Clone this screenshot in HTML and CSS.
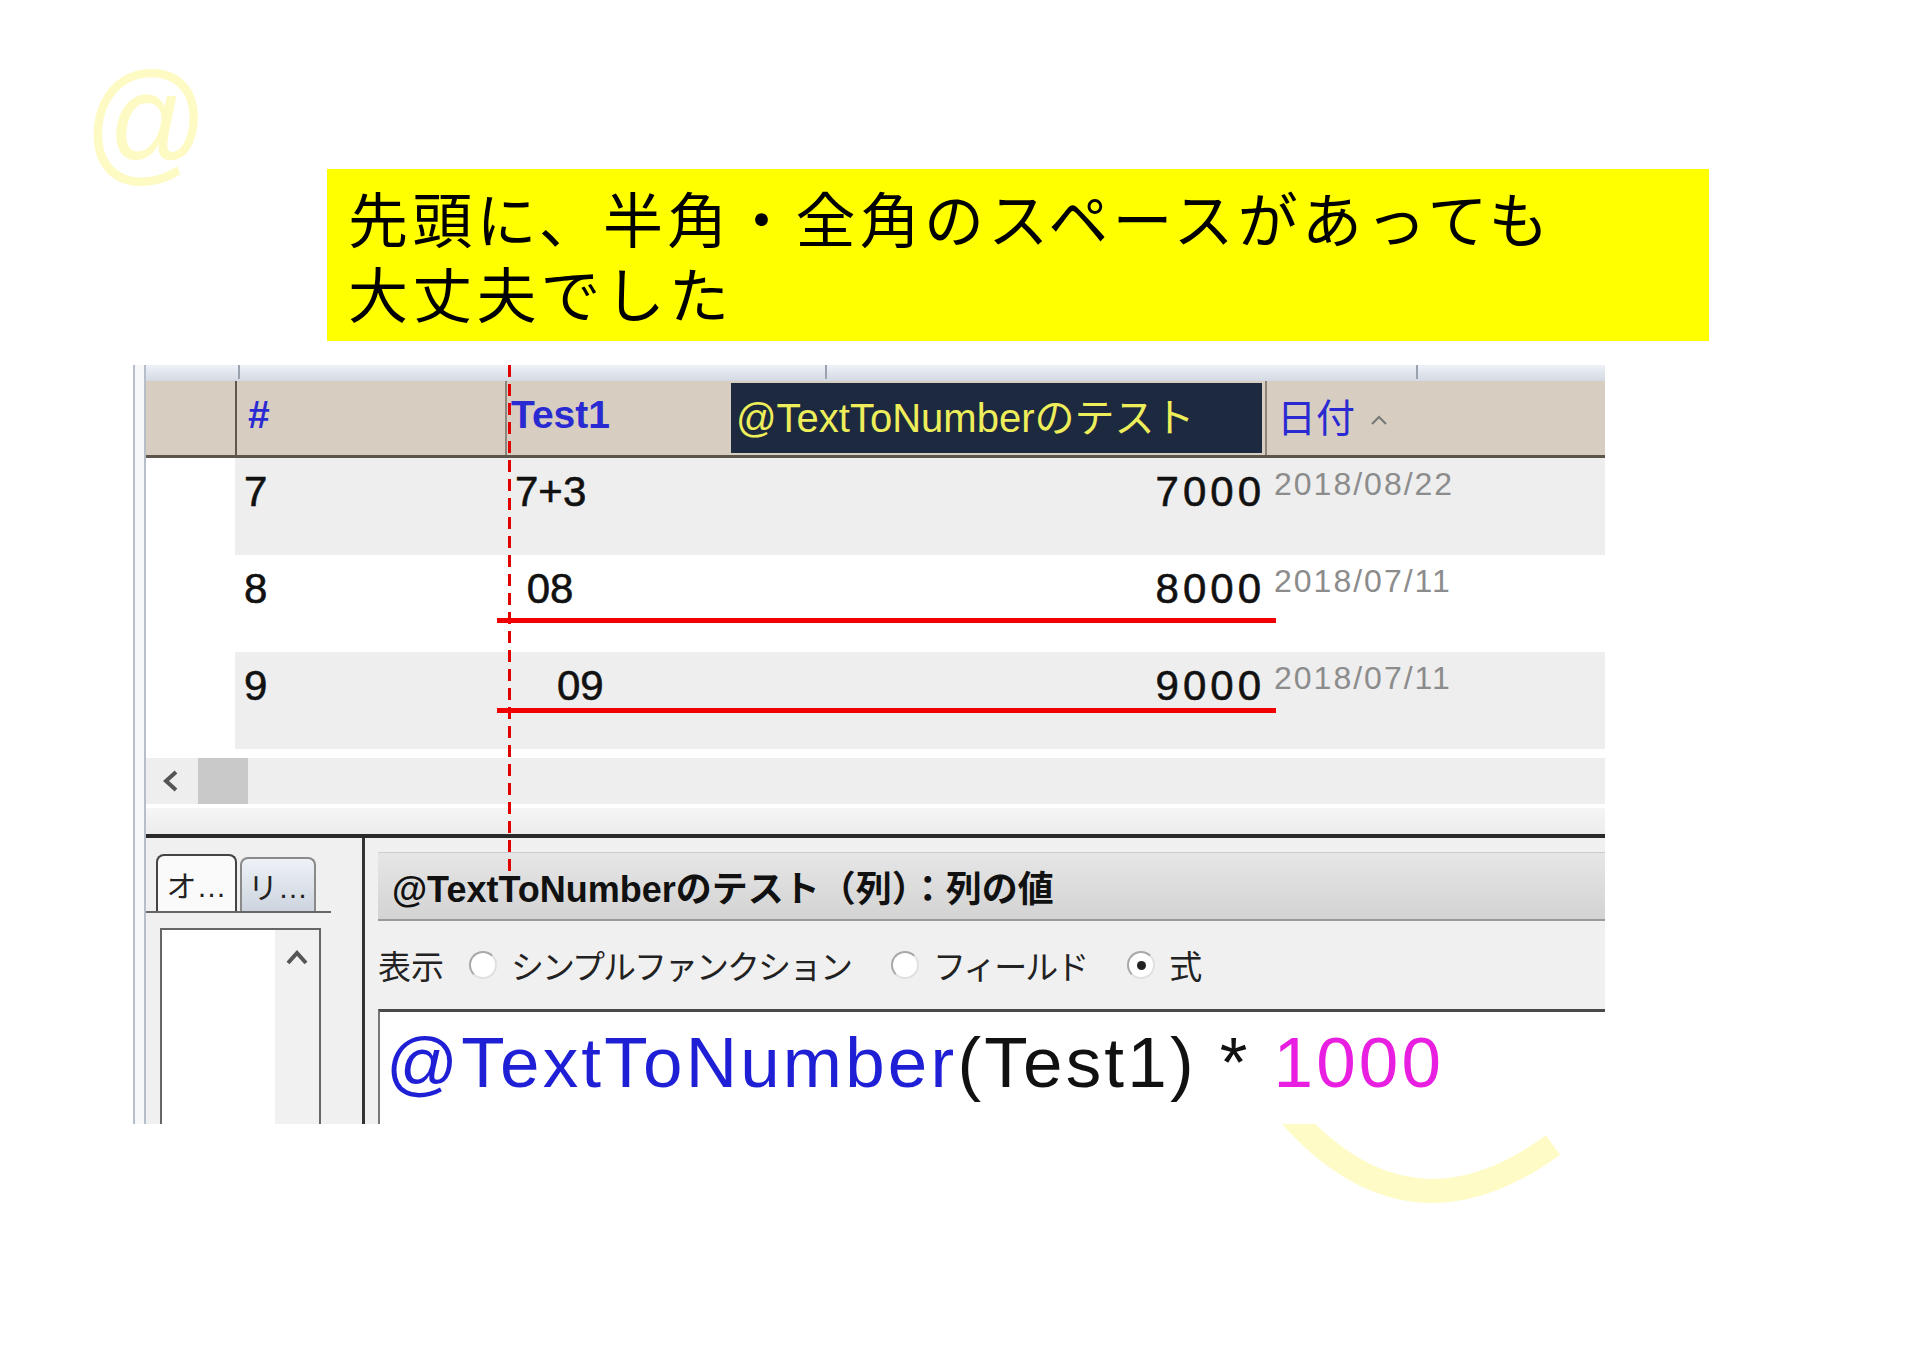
FILE: index.html
```html
<!DOCTYPE html>
<html lang="ja">
  <head>
    <meta charset="UTF-8">
    <meta name="viewport" content="width=device-width, initial-scale=1.0">
    <link rel="stylesheet" href="styles.css">
    <title>TextToNumber</title>
  </head>
  <body>
    <div class="mark-at">@</div>
    <svg class="mark-arc" width="300" height="110" viewBox="0 0 300 110">
      <path d="M10 15 Q130 150 273 45" fill="none" stroke="#fefbc6" stroke-width="24"/>
    </svg>

    <div class="note">
      <p>先頭に、半角・全角のスペースがあっても<br>大丈夫でした</p>
    </div>

    <div class="shot">
      <div class="edge"></div>
      <div class="app">
        <div class="topband">
          <span class="tick t1"></span>
          <span class="tick t2"></span>
          <span class="tick t3"></span>
        </div>

        <div class="grid head">
          <div class="cell c-blank"></div>
          <div class="cell c-no">#</div>
          <div class="cell c-test">Test1</div>
          <div class="cell c-calc"><span class="selected">@TextToNumberのテスト</span></div>
          <div class="cell c-date">日付
            <svg class="sort" width="20" height="14" viewBox="0 0 20 14"><polyline points="3,11 10,4 17,11" fill="none" stroke="#777" stroke-width="2"/></svg>
          </div>
        </div>

        <div class="grid row alt">
          <div class="cell c-blank"></div>
          <div class="cell c-no">7</div>
          <div class="cell c-test">7+3</div>
          <div class="cell c-calc">7000</div>
          <div class="cell c-date">2018/08/22</div>
        </div>
        <div class="grid row">
          <div class="cell c-blank"></div>
          <div class="cell c-no">8</div>
          <div class="cell c-test"> 08</div>
          <div class="cell c-calc">8000</div>
          <div class="cell c-date">2018/07/11</div>
        </div>
        <div class="grid row alt">
          <div class="cell c-blank"></div>
          <div class="cell c-no">9</div>
          <div class="cell c-test">　09</div>
          <div class="cell c-calc">9000</div>
          <div class="cell c-date">2018/07/11</div>
        </div>

        <div class="hscroll">
          <div class="scroll-track">
            <svg class="scroll-left" width="22" height="24" viewBox="0 0 22 24"><polyline points="16,3 6,12 16,21" fill="none" stroke="#555" stroke-width="4"/></svg>
            <div class="scroll-thumb"></div>
          </div>
          <div class="scroll-foot"></div>
        </div>

        <div class="bottom">
          <div class="side">
            <div class="tabs">
              <div class="tab active">オ…</div>
              <div class="tab">リ…</div>
            </div>
            <div class="listbox">
              <div class="list-area"></div>
              <div class="list-bar">
                <svg width="26" height="18" viewBox="0 0 26 18"><polyline points="4,15 13,5 22,15" fill="none" stroke="#555" stroke-width="4"/></svg>
              </div>
            </div>
          </div>

          <div class="editor">
            <div class="editor-title">@TextToNumberのテスト（列）：列の値</div>
            <div class="mode">
              <span class="label">表示</span>
              <span class="radio"></span>
              <span class="opt">シンプルファンクション</span>
              <span class="radio"></span>
              <span class="opt">フィールド</span>
              <span class="radio checked"></span>
              <span class="opt">式</span>
            </div>
            <div class="formula"><span class="fn">@TextToNumber</span>(Test1) * <span class="num">1000</span></div>
          </div>
        </div>
      </div>

      <div class="guide"></div>
      <div class="underline u1"></div>
      <div class="underline u2"></div>
    </div>
  </body>
</html>
```

FILE: styles.css
```css
body {
  margin: 0;
  width: 1920px;
  height: 1358px;
  overflow: hidden;
  background-color: #ffffff;
  position: relative;
  font-family: "Liberation Sans", "Noto Sans CJK JP", sans-serif;
}

/* pale watermarks behind the slide */
.mark-at {
  position: absolute;
  left: 84px;
  top: 52px;
  font-size: 136px;
  line-height: 1;
  color: #fdfac4;
  transform: scaleX(0.9);
  transform-origin: left top;
}

.mark-arc {
  position: absolute;
  left: 1280px;
  top: 1100px;
}

.note {
  position: relative;
  margin: 169px 0 0 327px;
  width: 1382px;
  box-sizing: border-box;
  padding: 10px 0 12px 21px;
  background-color: #ffff00;
}

.note p {
  margin: 0;
  font-family: "Noto Sans CJK JP", sans-serif;
  font-size: 60px;
  line-height: 75px;
  letter-spacing: 4.2px;
  color: #000000;
}

/* screenshot */
.shot {
  position: relative;
  z-index: 1;
  display: flex;
  margin: 24px 0 0 133px;
  width: 1472px;
  height: 759px;
  overflow: hidden;
}

.edge {
  flex-shrink: 0;
  width: 9px;
  border-left: 2px solid #b6bec9;
  border-right: 2px solid #b6bec9;
  background-color: #f7f8fa;
}

.app {
  flex: 1;
  min-width: 0;
  display: flex;
  flex-direction: column;
  background-color: #ffffff;
}

.app > div {
  flex-shrink: 0;
}

.topband {
  display: flex;
  height: 16px;
  background: linear-gradient(#eef1f6, #d3d9e3);
}

.tick {
  width: 2px;
  height: 14px;
  background-color: #9aa2ae;
}
.t1 { margin-left: 92px; }
.t2 { margin-left: 585px; }
.t3 { margin-left: 589px; }

.grid {
  display: grid;
  grid-template-columns: 89px 270px 226px 534px 1fr;
}

.head {
  height: 74px;
  background-color: #d7cdc0;
  border-bottom: 3px solid #5c554c;
  font-size: 39px;
  font-weight: bold;
  color: #2a2ad2;
}

.head .cell {
  display: flex;
  align-items: center;
  padding-bottom: 6px;
  box-sizing: border-box;
}

.head .c-no {
  border-left: 2px solid #5f584e;
  padding-left: 11px;
}

.head .c-test {
  border-left: 2px solid #8c857b;
  padding-left: 4px;
}

.head .c-calc {
  padding: 2px 3px 2px 0;
}

.head .selected {
  display: flex;
  align-items: center;
  width: 100%;
  height: 100%;
  padding: 0 0 6px 5px;
  box-sizing: border-box;
  background-color: #1d293f;
  color: #eeee5a;
  font-weight: normal;
  font-size: 40px;
}

.head .c-date {
  border-left: 2px solid #8c857b;
  padding-left: 10px;
  font-weight: normal;
}

.sort {
  margin: 10px 0 0 14px;
}

.row {
  height: 97px;
  font-size: 42px;
  line-height: 1;
  color: #111111;
  -webkit-text-stroke: 0.6px #111111;
}

.row .cell {
  padding-top: 13px;
  white-space: pre;
}

.row.alt .cell {
  background-color: #eeeeee;
}

.row.alt .c-blank {
  background-color: #ffffff;
}

.row .c-no {
  padding-left: 9px;
}

.row .c-test {
  padding-left: 10px;
}

.row .c-calc {
  text-align: right;
  padding-right: 0;
  letter-spacing: 4px;
}

.row .c-date {
  padding: 10px 0 0 9px;
  font-size: 32px;
  letter-spacing: 2px;
  color: #8c8c8c;
  -webkit-text-stroke: 0;
}

.hscroll {
  padding-top: 9px;
  border-bottom: 4px solid #2a2a2a;
}

.scroll-track {
  display: flex;
  align-items: center;
  height: 46px;
  background-color: #eeeeee;
  border-bottom: 4px solid #ffffff;
}

.scroll-left {
  margin-left: 14px;
}

.scroll-thumb {
  width: 50px;
  height: 100%;
  margin-left: 16px;
  background-color: #c9c9c9;
}

.scroll-foot {
  height: 26px;
  background: linear-gradient(#f6f6f6, #ececec);
}

.app > .bottom {
  flex: 1;
  min-height: 0;
  display: flex;
  background-color: #f0f0f0;
}

.side {
  flex-shrink: 0;
  width: 216px;
  padding-top: 16px;
  border-right: 3px solid #333333;
}

.tabs {
  display: flex;
  align-items: flex-end;
  width: 175px;
  height: 57px;
  padding-left: 10px;
  border-bottom: 2px solid #666666;
}

.tab {
  display: flex;
  align-items: center;
  justify-content: center;
  width: 72px;
  height: 52px;
  margin-left: 3px;
  border: 2px solid #8a8a8a;
  border-bottom: none;
  border-radius: 8px 8px 0 0;
  background: linear-gradient(#eef2f7, #cdd4de);
  font-size: 30px;
  color: #222222;
}

.tab.active {
  width: 77px;
  height: 55px;
  margin-left: 0;
  border-color: #444444;
  background: #fafafa;
}

.listbox {
  display: flex;
  width: 157px;
  height: 200px;
  margin: 15px 0 0 14px;
  border: 2px solid #666666;
  border-bottom: none;
}

.list-area {
  flex: 1;
  background-color: #ffffff;
}

.list-bar {
  width: 44px;
  display: flex;
  justify-content: center;
  align-items: flex-start;
  padding-top: 18px;
  background-color: #f1f1f1;
}

.editor {
  flex: 1;
  min-width: 0;
  display: flex;
  flex-direction: column;
  padding: 14px 0 0 13px;
}

.editor-title {
  flex-shrink: 0;
  height: 69px;
  display: flex;
  align-items: center;
  padding-left: 14px;
  box-sizing: border-box;
  border-top: 1px solid #cccccc;
  border-bottom: 2px solid #9a9a9a;
  background: linear-gradient(#e6e6e6, #d3d3d3);
  font-size: 36px;
  font-weight: bold;
  color: #111111;
}

.mode {
  flex-shrink: 0;
  height: 88px;
  display: flex;
  align-items: center;
  font-family: "Noto Sans CJK JP", sans-serif;
  font-size: 33px;
  color: #222222;
}

.mode .label {
  margin-right: 25px;
}

.mode .opt {
  letter-spacing: -2px;
  margin: 0 40px 0 14px;
}

.radio {
  width: 24px;
  height: 24px;
  border-radius: 50%;
  border: 2px solid #a8a8a8;
  border-right-color: #e0e0e0;
  border-bottom-color: #e0e0e0;
  background-color: #ffffff;
  display: flex;
  align-items: center;
  justify-content: center;
}

.radio.checked::after {
  content: "";
  width: 9px;
  height: 9px;
  border-radius: 50%;
  background-color: #222222;
}

.formula {
  flex: 1;
  padding: 15px 0 0 6px;
  border-top: 3px solid #4a4a4a;
  border-left: 2px solid #777777;
  background-color: #ffffff;
  font-size: 71px;
  line-height: 1;
  letter-spacing: 3.2px;
  color: #111111;
  white-space: pre;
}

.formula .fn {
  color: #1f1fd6;
}

.formula .num {
  color: #e81ee0;
}

/* red annotations over the screenshot */
.guide {
  position: absolute;
  left: 375px;
  top: 0;
  width: 3px;
  height: 509px;
  background: repeating-linear-gradient(#e00000 0 12px, transparent 12px 19px);
}

.underline {
  position: absolute;
  left: 364px;
  width: 779px;
  height: 5px;
  background-color: #f00000;
}
.u1 { top: 253px; }
.u2 { top: 343px; }
```
